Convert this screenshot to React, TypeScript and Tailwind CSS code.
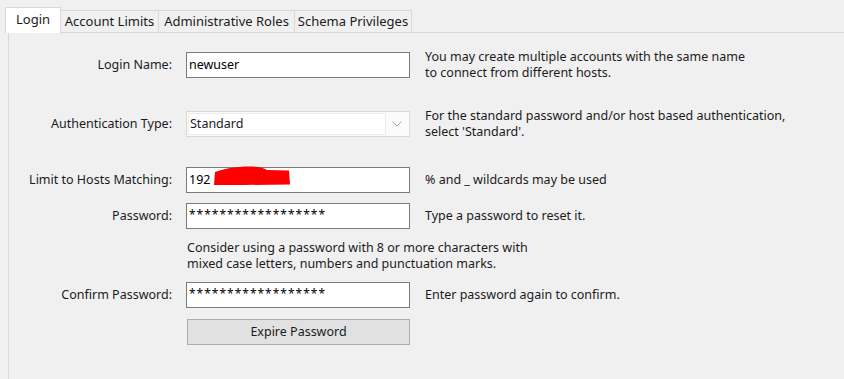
import React from 'react';

// MySQL Workbench - kullanıcı hesabı "Login" sekmesi
const tabs = [
  { name: 'Login', w: 'w-[56px]' },
  { name: 'Account Limits', w: 'w-[98px]' },
  { name: 'Administrative Roles', w: 'w-[136px]' },
  { name: 'Schema Privileges', w: 'w-[117px]' },
];

const Field: React.FC<{ label: string; children: React.ReactNode; note?: React.ReactNode; className?: string }> = ({
  label,
  children,
  note,
  className = '',
}) => (
  <div className={`flex items-center h-[26px] ${className}`}>
    <div className="w-[163px] shrink-0 text-right">{label}</div>
    <div className="ml-[14px] w-[224px] shrink-0">{children}</div>
    {note && <div className="ml-[15px] leading-[16px] whitespace-nowrap">{note}</div>}
  </div>
);

const TextBox: React.FC<{ children?: React.ReactNode }> = ({ children }) => (
  <div className="relative h-[26px] border border-[#7a7a7a] bg-white flex items-center pl-[2px] text-black">
    {children}
  </div>
);

const Stars = () => (
  <span className="tracking-[1px] text-[12px] -mt-[3px]">******************</span>
);

const App: React.FC = () => {
  return (
    <div
      className="w-[844px] h-[379px] bg-[#f0f0f0] text-[12.5px] text-[#1b1b1b] overflow-hidden"
      style={{ fontFamily: '"Noto Sans", Tahoma, sans-serif' }}
    >
      {/* sekme şeridi */}
      <div className="flex items-end pl-[5px] pt-[7px] h-[32px] relative z-10 text-[13px]">
        {tabs.map((t, i) =>
          i === 0 ? (
            <div
              key={t.name}
              className={`h-[26px] ${t.w} bg-white border border-b-0 border-[#d9d9d9] flex items-center justify-center -mb-[1px] pb-[2px]`}
            >
              {t.name}
            </div>
          ) : (
            <div
              key={t.name}
              className={`h-[22px] ${t.w} bg-[#f0f0f0] border border-l-0 border-b-0 border-[#d9d9d9] flex items-center justify-center whitespace-nowrap`}
            >
              {t.name}
            </div>
          )
        )}
      </div>

      {/* içerik paneli */}
      <div className="ml-[8px] h-[360px] border-l border-t border-[#d9d9d9] bg-[#f0f0f0] pt-[19px]">
        <Field
          label="Login Name:"
          note={
            <>
              You may create multiple accounts with the same name
              <br />
              to connect from different hosts.
            </>
          }
        >
          <TextBox>newuser</TextBox>
        </Field>

        <Field
          className="mt-[33px]"
          label="Authentication Type:"
          note={
            <>
              For the standard password and/or host based authentication,
              <br />
              select 'Standard'.
            </>
          }
        >
          <div className="h-[26px] border border-[#d9d9d9] bg-[#fbfbfb] flex items-center p-[1px]">
            <div className="h-full flex-1 border border-[#ececec] bg-white flex items-center pl-[1px]">Standard</div>
            <div className="w-[22px] h-full flex items-center justify-center">
              <svg width="10" height="6" viewBox="0 0 10 6">
                <path d="M0.5 0.5 L5 5 L9.5 0.5" fill="none" stroke="#a8a8a8" strokeWidth="1" />
              </svg>
            </div>
          </div>
        </Field>

        <Field className="mt-[30px]" label="Limit to Hosts Matching:" note="% and _ wildcards may be used">
          <TextBox>
            <span>192</span>
            <svg className="absolute left-[26px] top-[-2px]" width="80" height="22" viewBox="0 0 80 22">
              <path
                d="M2 6 C10 3 20 1 32 0.5 C42 0 50 1.5 54 4 L76 4.5 L77 18.5 L30 19 L1 19 Z"
                fill="#ff0000"
              />
            </svg>
          </TextBox>
        </Field>

        <Field className="mt-[10px]" label="Password:" note="Type a password to reset it.">
          <TextBox>
            <Stars />
          </TextBox>
        </Field>

        <div className="ml-[178px] h-[53px] flex flex-col justify-center leading-[16px]">
          <div>Consider using a password with 8 or more characters with</div>
          <div>mixed case letters, numbers and punctuation marks.</div>
        </div>

        <Field label="Confirm Password:" note="Enter password again to confirm.">
          <TextBox>
            <Stars />
          </TextBox>
        </Field>

        <div className="ml-[178px] mt-[11px] w-[223px] h-[26px] border border-[#adadad] bg-[#e1e1e1] flex items-center justify-center">
          Expire Password
        </div>
      </div>
    </div>
  );
};

export default App;
